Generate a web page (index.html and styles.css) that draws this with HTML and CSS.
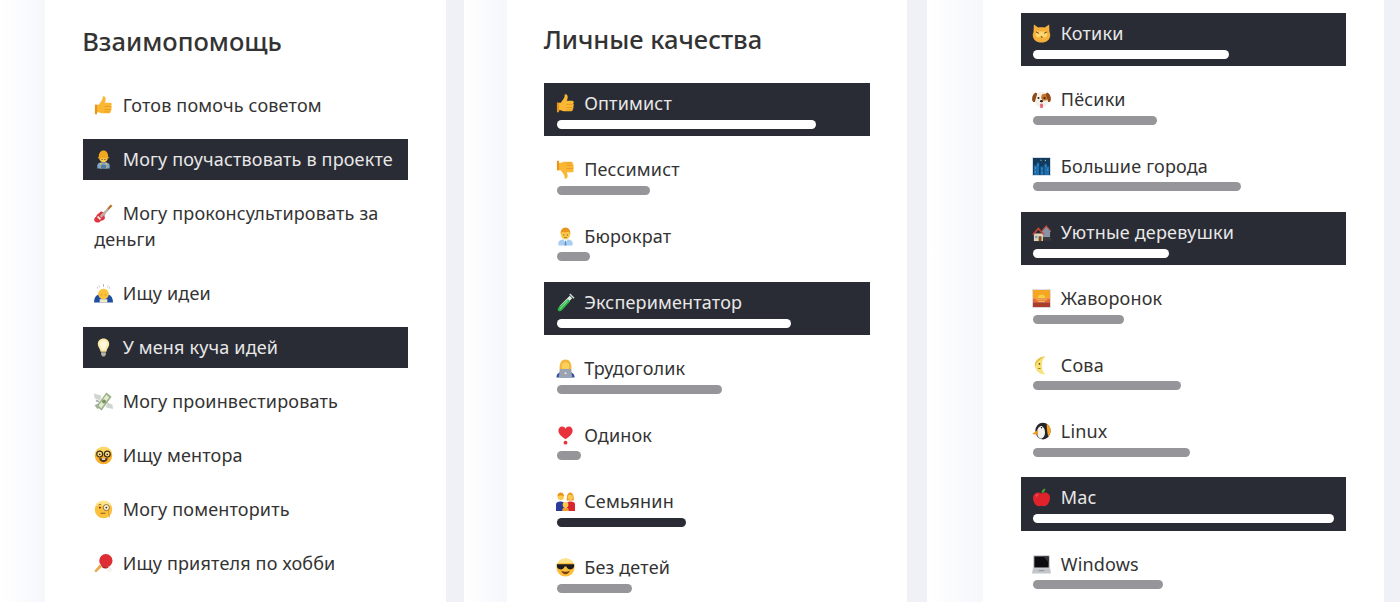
FILE: index.html
```html
<!DOCTYPE html>
<html lang="ru">
<head>
    <meta charset="UTF-8">
    <meta name="viewport" content="width=device-width, initial-scale=1.0">
    <title>Взаимопомощь и личные качества</title>
    <link rel="stylesheet" href="styles.css">
</head>
<body>
    <!-- emoji drawn by hand, one symbol each -->
    <svg class="sprite" xmlns="http://www.w3.org/2000/svg">
        <symbol id="i-up" viewBox="0 0 20 20">
            <g transform="translate(0 -.6) scale(1 1.1)">
                <path fill="#f9b733" d="M1 9h4l3.200-4.200C9 3.600 9.200 2.400 9.200 1c1.900-.6 3.100.8 3.100 2.600 0 1.300-.4 2.400-1 3.400h5.900c1.500 0 2 2 .8 2.700 1 .6 1 2.100.1 2.700.8.7.5 2.100-.5 2.400.4 1.100-.2 2.200-1.500 2.200H9c-1.600 0-2.800-.7-4-1H1z"/>
                <path fill="#e8951c" d="M1 9h2.200v8.900H1zM11 10.300h6.500v.8H11zM11 12.900h6.200v.8H11zM11 15.400h5.500v.8H11z"/>
            </g>
        </symbol>
        <symbol id="i-down" viewBox="0 0 20 20">
            <g transform="translate(0 -1.400) scale(1 1.1)">
                <path fill="#f9b733" d="M1 11h4l3.200 4.200c.8 1.200 1 2.400 1 3.800 1.900.6 3.100-.8 3.100-2.600 0-1.300-.4-2.400-1-3.400h5.900c1.500 0 2-2 .8-2.700 1-.6 1-2.100.1-2.700.8-.7.5-2.100-.5-2.400.4-1.100-.2-2.200-1.500-2.200H9c-1.600 0-2.800.7-4 1H1z"/>
                <path fill="#e8951c" d="M1 2.100h2.200V11H1zM11 8.900h6.500v.8H11zM11 6.300h6.200v.8H11zM11 3.800h5.500v.8H11z"/>
            </g>
        </symbol>
        <symbol id="i-worker" viewBox="0 0 20 20">
            <path fill="#7fa6c9" d="M3.500 19.500v-3C3.500 14 6 13 10 13s6.500 1 6.500 3.500v3z"/>
            <path fill="#f6c23c" d="M6.500 13.500h1.500v6H6.500zM12 13.500h1.500v6H12z"/>
            <path fill="#4f7fae" d="M7 15.500h6v4H7z"/>
            <circle cx="10" cy="8.500" r="4.500" fill="#fbc94a"/>
            <path fill="#f2a922" d="M5 7.500C5 3 7 .5 10 .5s5 2.500 5 7l1 .5v.8H4V8z"/>
            <path fill="#5a3a1a" d="M8 9.500h1v1H8zM11 9.500h1v1h-1z"/>
        </symbol>
        <symbol id="i-guitar" viewBox="0 0 20 20">
            <path fill="#e0353f" d="M8 8c1 .8 3 .8 3.800 1.700.5.700-.5 1.500-.8 2.300-.3 1 1.400 2.400-.1 4-1.500 1.700-3.800 1.200-4.400 2.500C5.700 20 2 20 .7 18.100c-.9-1.300-.5-3.400.7-4.100 1-.5 1.200-1.800 2-2.900C4.200 10 5.500 10 6 9 6.400 8.100 7.200 7.500 8 8z"/>
            <path fill="#b8b2a8" d="M6 12.500l8.500-8.500 1.800 1.800L8 14.500z"/>
            <path fill="#f4f2ea" d="M4.500 12.500l3 3-1.400 1.300-3-3z"/>
            <path fill="#b9712c" d="M14 4.500L17.500.5l2 1.500-4 4z"/>
        </symbol>
        <symbol id="i-bow" viewBox="0 0 20 20">
            <path fill="#1f4fa0" d="M0 19.500c0-4.500 1.500-7.500 5-8.500h10c3.500 1 5 4 5 8.500z"/>
            <circle cx="10" cy="10.500" r="5.600" fill="#fbc33c"/>
            <path fill="#d98f16" d="M6.800 11h2.200v.8H6.800zM11 11h2.200v.8H11z"/>
            <path fill="#f2e9c8" d="M6 16h8v3.500H6z"/>
            <path fill="#9aa0a8" d="M5 .5l1 3-.8.3zM9.600 0h.8v3h-.8zM15 .5l-1 3 .8.3zM2.500 2l2 2.500-.6.500zM17.500 2l-2 2.500.6.500z"/>
        </symbol>
        <symbol id="i-bulb" viewBox="0 0 20 20">
            <path fill="#fde9a8" d="M10 .5c3.600 0 6 2.600 6 5.800 0 3-2.400 4.700-3 8.200H7c-.6-3.500-3-5.200-3-8.200C4 3.100 6.400.5 10 .5z"/>
            <path fill="#fff8dc" d="M10 2.500c2 0 3.500 1.600 3.500 3.700 0 2-1.500 3.500-2.200 6H8.700C8 9.700 6.500 8.200 6.500 6.200 6.500 4.100 8 2.500 10 2.500z"/>
            <path fill="#b6b3a6" d="M7.500 15h5v2.500l-1.500 2H9l-1.500-2z"/>
        </symbol>
        <symbol id="i-money" viewBox="0 0 20 20">
            <path fill="#cfd6cf" d="M0 1.500l8 2.500-1.500 5L.5 6.500zM20 18l-7.500-2 1.500-5 5.500 2.500z"/>
            <path fill="#a9b3a9" d="M.5 14l5-2.500 3 3.500L3.500 18zM2 8l4 1.500-1 1.500-3-1z"/>
            <path fill="#9ab088" d="M13 .5L18.500 5 8 19.500 2.500 15z"/>
            <path fill="#e2ebcd" d="M13 3l3 2.400L7.700 17l-3-2.400z"/>
            <circle cx="10.500" cy="10" r="2.100" fill="#7a9468"/>
        </symbol>
        <symbol id="i-nerd" viewBox="0 0 20 20">
            <circle cx="10" cy="10" r="9.200" fill="#f7b02c"/>
            <path fill="#fdd866" d="M10 .8a9.200 9.200 0 0 1 9 7.200H1A9.200 9.200 0 0 1 10 .8z"/>
            <circle cx="6" cy="8.500" r="3.100" fill="#fbe08a" stroke="#3a2a16" stroke-width="1.300"/>
            <circle cx="14" cy="8.500" r="3.100" fill="#fbe08a" stroke="#3a2a16" stroke-width="1.300"/>
            <circle cx="6" cy="8.800" r=".9" fill="#3a2a16"/>
            <circle cx="14" cy="8.800" r=".9" fill="#3a2a16"/>
            <path fill="#5b3413" d="M5.500 13h9c0 2.500-2 4-4.500 4s-4.500-1.500-4.500-4z"/>
            <path fill="#fff" d="M8.300 13h3.400v1.500H8.300z"/>
        </symbol>
        <symbol id="i-monocle" viewBox="0 0 20 20">
            <circle cx="10" cy="10" r="9.200" fill="#fbc03c"/>
            <path fill="#fde58a" d="M10 .8a9.200 9.200 0 0 1 8.200 5.200H1.800A9.200 9.200 0 0 1 10 .8z"/>
            <circle cx="13" cy="8" r="3.200" fill="#fff6d8" stroke="#7a5a24" stroke-width=".9"/>
            <circle cx="13" cy="8" r="1" fill="#3a2a16"/>
            <circle cx="6.200" cy="8" r="1" fill="#3a2a16"/>
            <path fill="#8a5a1c" d="M4.500 5l3-1 .3.700-3 1zM7 13.500h5v.9H7z"/>
            <path fill="#c78a24" d="M15.500 10.500l1 8h-.6l-1-7.800z"/>
        </symbol>
        <symbol id="i-pong" viewBox="0 0 20 20">
            <circle cx="12.500" cy="7" r="7" fill="#dd2e35"/>
            <path fill="#b31f26" d="M6 9.500c1.500 3 4.500 4.500 8 4.300 1 0 2-.5 2.800-1-2 2.500-5 3-7.500 2z"/>
            <path fill="#e9a84a" d="M.5 17.500l5.500-6.500 2.500 2.500L2 19.500z"/>
            <circle cx="16.500" cy="16.500" r="2.500" fill="#f3f1ec"/>
        </symbol>
        <symbol id="i-office" viewBox="0 0 20 20">
            <path fill="#a8cdf0" d="M2.500 19.500v-2.500c0-2.500 3-4 7.500-4s7.500 1.500 7.500 4v2.500z"/>
            <path fill="#fff" d="M7.500 13h5L10 17z"/>
            <path fill="#5b8fc7" d="M9.500 14.500h1l.5 5H9z"/>
            <circle cx="10" cy="8" r="5" fill="#fbc94a"/>
            <path fill="#e8951c" d="M5 8C4.300 3.500 6.500.5 10 .5s5.700 3 5 7.500c-.5-1.500-1-2.500-2-3-2 .8-4.500.8-6 0-1 .5-1.500 1.500-2 3z"/>
            <path fill="#5a3a1a" d="M7.700 8h1v1h-1zM11.300 8h1v1h-1zM8.500 10.700h3v.6h-3z"/>
        </symbol>
        <symbol id="i-tube" viewBox="0 0 20 20">
            <path fill="#cfe7d6" d="M15 .5l4.500 4.500-1 1-4.500-4.500z"/>
            <path fill="#dcefe4" d="M14.500 3l2.500 2.500L6 16.500l-2.500-2.500z"/>
            <path fill="#2fb548" d="M12.500 6.500L15 8.800 6 18.500c-1 1-2.800 1-3.700.2-.8-.8-.7-2.500.3-3.500z"/>
            <path fill="#7fdc8c" d="M11.800 8l.8.8-8 8.200-.7-.7z"/>
        </symbol>
        <symbol id="i-tech" viewBox="0 0 20 20">
            <path fill="#2f4fa8" d="M.5 19.500c0-4 3-6.500 9.500-6.500s9.500 2.500 9.500 6.500z"/>
            <path fill="#f2b63c" d="M4 12C3 5.500 5 .5 10 .5S17 5.500 16 12z"/>
            <circle cx="10" cy="7.500" r="4" fill="#fbd05a"/>
            <path fill="#9aa3ae" d="M4 10.500h12l1 9H3z"/>
            <circle cx="10" cy="15" r="1.100" fill="#e6e9ee"/>
        </symbol>
        <symbol id="i-heart" viewBox="0 0 20 20">
            <path fill="#e8323c" d="M10 14C5 10.800 2.500 8 2.500 5 2.500 2.300 4.300.5 6.300.5c1.600 0 3 .9 3.700 2.300C10.700 1.400 12.100.5 13.700.5c2 0 3.800 1.800 3.800 4.500 0 3-2.500 5.800-7.500 9z"/>
            <circle cx="10" cy="17.500" r="2" fill="#e8323c"/>
        </symbol>
        <symbol id="i-family" viewBox="0 0 20 20">
            <path fill="#2a3a96" d="M0 20v-7c0-2 2-3 4.500-3 2 0 3.500.5 4.500 2v8z"/>
            <path fill="#d8262e" d="M11 20v-8c1-1.500 2.500-2 4.500-2 2.500 0 4.500 1 4.500 3v7z"/>
            <circle cx="5" cy="5" r="3.400" fill="#fbc94a"/>
            <path fill="#e8951c" d="M1.600 4.500C1.600 2 3 .5 5 .5s3.400 1.500 3.400 4C6.500 3.500 4 3.500 1.600 4.500z"/>
            <path fill="#e8951c" d="M11.500 9c-.7-4.500.8-8.500 3.500-8.500S19.200 4.500 18.500 9z"/>
            <circle cx="15" cy="5.500" r="2.800" fill="#fbc94a"/>
            <path fill="#f0a02c" d="M6.500 20c0-2.500 1.300-4 3.500-4s3.500 1.500 3.500 4z"/>
            <circle cx="10" cy="13.500" r="3" fill="#fbc94a"/>
        </symbol>
        <symbol id="i-cool" viewBox="0 0 20 20">
            <circle cx="10" cy="10" r="9.500" fill="#fbbe3c"/>
            <path fill="#fde28a" d="M10 .5a9.500 9.500 0 0 1 8.200 4.700H1.800A9.500 9.500 0 0 1 10 .5z"/>
            <path fill="#1d1d1f" d="M.8 6.500h18.400v1.500c0 2.500-1.500 4-4.200 4-2.200 0-3.500-1.300-4-3H9c-.5 1.700-1.800 3-4 3-2.700 0-4.200-1.500-4.200-4z"/>
            <path fill="#7a3d12" d="M5.500 13.500c3 1.300 6 1.300 9 0-.7 2.500-2.500 3.500-4.500 3.500s-3.800-1-4.500-3.500z"/>
        </symbol>
        <symbol id="i-cat" viewBox="0 0 20 20">
            <path fill="#f5b03a" d="M2 .5l4.500 3.300C8.500 3.200 11.500 3.200 13.500 3.800L18 .5l.4 8c.5 1 .8 2 .8 3 0 4.800-4 8-9.200 8S.8 16.300.8 11.500c0-1 .3-2 .8-3z"/>
            <path fill="#fdd76e" d="M5 8h10c1.500 2 1.500 4 0 6H5c-1.500-2-1.500-4 0-6z"/>
            <path fill="#5a3413" d="M4.500 8l3 1.500-.4.800-3-1.500zM15.500 8l-3 1.500.4.800 3-1.500zM8.800 13.500l2-1 .3.600-1 .5 1 .5-.3.600z"/>
        </symbol>
        <symbol id="i-dog" viewBox="0 0 20 20">
            <ellipse cx="10" cy="10" rx="7.800" ry="8.200" fill="#f6f1e8"/>
            <circle cx="13.300" cy="7.500" r="3.600" fill="#c4752c"/>
            <path fill="#8f4a18" d="M4 2.500C1.200 3.500-.2 7 .2 10.500c.2 1.600 1.400 2.500 2.800 2L5.500 4zM16 2.500c2.800 1 4.200 4.500 3.800 8-.2 1.600-1.400 2.500-2.800 2L14.500 4z"/>
            <circle cx="6.800" cy="8.500" r="1.100" fill="#2a1a0c"/>
            <circle cx="13.200" cy="8.500" r="1.100" fill="#2a1a0c"/>
            <ellipse cx="10" cy="11.800" rx="1.700" ry="1.200" fill="#2a1a0c"/>
            <path fill="#e8677c" d="M8.500 14.500h3v3.500c0 1.500-3 1.500-3 0z"/>
        </symbol>
        <symbol id="i-city" viewBox="0 0 20 20">
            <path fill="#dfe6ee" d="M0 0h20v20H0z"/>
            <path fill="#113a5e" d="M1 1h18v18H1z"/>
            <path fill="#1f6fae" d="M2 19V9h3V6h2.500v13zM9 19v-9h3v9zM13 19V7h2.500v3H18v9z"/>
            <path fill="#5fb2d8" d="M3 11h1v1H3zM6 8h1v1H6zM10 12h1v1h-1zM14 9h1v1h-1zM16 13h1v1h-1zM3 15h1v1H3zM10 16h1v1h-1z"/>
            <path fill="#cfe4a8" d="M14 2.500l.8 1.500-1.500.5zM9 3h1v1H9z"/>
        </symbol>
        <symbol id="i-houses" viewBox="0 0 20 20">
            <path fill="#8a93a6" d="M10 9l5-6 5 6-1 .5V15h-8z"/>
            <path fill="#bd3f2e" d="M10 8l5-6 5 6h-1.500L15 4l-3.500 4z"/>
            <path fill="#3a3a3a" d="M11 15h9v3.500h-9z"/>
            <path fill="#e3d2b5" d="M2 11h9.500v8H2z"/>
            <path fill="#c8452f" d="M0 12l6.700-7.500L13.500 12h-2L6.700 7 2 12z"/>
            <path fill="#7a4a24" d="M7 14h3v5H7z"/>
            <path fill="#6fa4cc" d="M3.200 13.500h2.500V16H3.200z"/>
        </symbol>
        <symbol id="i-sunrise" viewBox="0 0 20 20">
            <path fill="#dfe0e6" d="M0 0h20v20H0z"/>
            <path fill="#f5a623" d="M1 1h18v9H1z"/>
            <path fill="#f7d04a" d="M6 10a4 4 0 0 1 8 0z"/>
            <path fill="#e8672a" d="M1 10h18v4H1z"/>
            <path fill="#a93c2a" d="M1 14h18v5H1z"/>
            <path fill="#f9d976" d="M4 11h12v.8H4zM6.500 13h7v.8h-7z"/>
        </symbol>
        <symbol id="i-moon" viewBox="0 0 20 20">
            <path fill="#f7e27a" d="M14 .3C7.500 1 3 5 3 10s4.500 9 11 9.700c-2.500-2.500-3.500-5.700-3.500-9.700S11.500 2.800 14 .3z"/>
            <path fill="#e6bd3a" d="M14 .3C7.500 1 3 5 3 10c0 .5 0 1 .1 1.500C4.500 6.500 9 3 14 .3z"/>
            <circle cx="7.800" cy="8.200" r=".9" fill="#5a4310"/>
            <path fill="#5a4310" d="M6.500 13h2.500v.7H6.500z"/>
        </symbol>
        <symbol id="i-penguin" viewBox="0 0 20 20">
            <ellipse cx="11.500" cy="9.500" rx="8" ry="8.800" fill="#26262a"/>
            <path fill="#f3a523" d="M15.500 2c3 1 4.500 4.500 4 8.500-.3 2-1.500 4-2.500 4.500-1-4-1.500-9-1.500-13z"/>
            <ellipse cx="9.500" cy="11" rx="4.200" ry="6.500" fill="#f4f2ee"/>
            <circle cx="9.800" cy="6" r="1.500" fill="#fff"/>
            <circle cx="10" cy="6" r=".8" fill="#111"/>
            <path fill="#ef9a1c" d="M0 12.500l6-4 .5 5z"/>
        </symbol>
        <symbol id="i-apple" viewBox="0 0 20 20">
            <path fill="#e0222c" d="M10 6c2-1.500 4.500-1.700 6.500-.5 2.500 1.500 3 5 2 8-1 3.300-3.200 5.800-5.500 5.800-1.200 0-2-.5-3-.5s-1.800.5-3 .5c-2.300 0-4.500-2.500-5.500-5.800-1-3-.5-6.500 2-8C5.500 4.300 8 4.500 10 6z"/>
            <path fill="#f2676e" d="M4 8c.8-1 2-1.500 3-1.300-1.500.8-2 2-2.300 3.500z"/>
            <path fill="#3f9e2c" d="M10 5.500C9.800 3 11 1 14 .5c0 2.700-1.500 4.500-4 5z"/>
            <path fill="#6b3a12" d="M9.500 3h.8v3h-.8z"/>
        </symbol>
        <symbol id="i-laptop" viewBox="0 0 20 20">
            <path fill="#a9acb2" d="M1.500 .5h17V14h-17z"/>
            <path fill="#0c0c0e" d="M2.500 1.500h15V13h-15z"/>
            <path fill="#34343a" d="M12 1.500h5.500V8z"/>
            <path fill="#c2c5ca" d="M1 14h18l1 5.500H0z"/>
            <path fill="#8d9096" d="M7 16h6v1H7z"/>
        </symbol>
    </svg>

    <div class="columns">
        <section class="column column-help">
            <div class="card">
                <h2 class="title">Взаимопомощь</h2>
                <ul class="list">
                    <li class="item"><svg class="emoji"><use href="#i-up"/></svg>Готов помочь советом</li>
                    <li class="item active"><svg class="emoji"><use href="#i-worker"/></svg>Могу поучаствовать в проекте</li>
                    <li class="item"><svg class="emoji"><use href="#i-guitar"/></svg>Могу проконсультировать за деньги</li>
                    <li class="item"><svg class="emoji"><use href="#i-bow"/></svg>Ищу идеи</li>
                    <li class="item active"><svg class="emoji"><use href="#i-bulb"/></svg>У меня куча идей</li>
                    <li class="item"><svg class="emoji"><use href="#i-money"/></svg>Могу проинвестировать</li>
                    <li class="item"><svg class="emoji"><use href="#i-nerd"/></svg>Ищу ментора</li>
                    <li class="item"><svg class="emoji"><use href="#i-monocle"/></svg>Могу поменторить</li>
                    <li class="item"><svg class="emoji"><use href="#i-pong"/></svg>Ищу приятеля по хобби</li>
                </ul>
            </div>
        </section>

        <section class="column column-traits">
            <div class="card">
                <h2 class="title">Личные качества</h2>
                <ul class="list list-bars">
                    <li class="item active"><svg class="emoji"><use href="#i-up"/></svg>Оптимист<div class="bar" style="width: 86%"></div></li>
                    <li class="item"><svg class="emoji"><use href="#i-down"/></svg>Пессимист<div class="bar" style="width: 31%"></div></li>
                    <li class="item"><svg class="emoji"><use href="#i-office"/></svg>Бюрократ<div class="bar" style="width: 11%"></div></li>
                    <li class="item active"><svg class="emoji"><use href="#i-tube"/></svg>Экспериментатор<div class="bar" style="width: 78%"></div></li>
                    <li class="item"><svg class="emoji"><use href="#i-tech"/></svg>Трудоголик<div class="bar" style="width: 55%"></div></li>
                    <li class="item"><svg class="emoji"><use href="#i-heart"/></svg>Одинок<div class="bar" style="width: 8%"></div></li>
                    <li class="item mine"><svg class="emoji"><use href="#i-family"/></svg>Семьянин<div class="bar" style="width: 43%"></div></li>
                    <li class="item"><svg class="emoji"><use href="#i-cool"/></svg>Без детей<div class="bar" style="width: 25%"></div></li>
                </ul>
            </div>
        </section>

        <section class="column column-likes">
            <div class="card">
                <ul class="list list-bars">
                    <li class="item active"><svg class="emoji"><use href="#i-cat"/></svg>Котики<div class="bar" style="width: 65%"></div></li>
                    <li class="item"><svg class="emoji"><use href="#i-dog"/></svg>Пёсики<div class="bar" style="width: 41%"></div></li>
                    <li class="item"><svg class="emoji"><use href="#i-city"/></svg>Большие города<div class="bar" style="width: 69%"></div></li>
                    <li class="item active"><svg class="emoji"><use href="#i-houses"/></svg>Уютные деревушки<div class="bar" style="width: 45%"></div></li>
                    <li class="item"><svg class="emoji"><use href="#i-sunrise"/></svg>Жаворонок<div class="bar" style="width: 30%"></div></li>
                    <li class="item"><svg class="emoji"><use href="#i-moon"/></svg>Сова<div class="bar" style="width: 49%"></div></li>
                    <li class="item"><svg class="emoji"><use href="#i-penguin"/></svg>Linux<div class="bar" style="width: 52%"></div></li>
                    <li class="item active"><svg class="emoji"><use href="#i-apple"/></svg>Mac<div class="bar" style="width: 100%"></div></li>
                    <li class="item"><svg class="emoji"><use href="#i-laptop"/></svg>Windows<div class="bar" style="width: 43%"></div></li>
                </ul>
            </div>
        </section>
    </div>
</body>
</html>
```

FILE: styles.css
```css
html, body {
    height: 100%;
}
body {
    margin: 0;
    font-family: "Noto Sans", "Open Sans", sans-serif;
    color: #333;
    background-color: #eff1f7;
    overflow: hidden;
}
.sprite {
    display: none;
}
.columns {
    display: flex;
    height: 602px;
    overflow: hidden;
}
.column {
    box-sizing: border-box;
    height: 602px;
    background: linear-gradient(90deg, #fff, #f5f7fb) no-repeat;
}
.column-help {
    width: 464px;
    padding-left: 45px;
    background-size: 45px 100%;
}
.column-traits {
    width: 463px;
    padding-left: 42.67px;
    background-size: 43px 100%;
}
.column-likes {
    width: 473px;
    padding-left: 56px;
    background-size: 56px 100%;
}
.card {
    box-sizing: border-box;
    width: 401px;
    height: 100%;
    padding: 0 37.8px;
    background-color: #fff;
}
.column-help .card {
    padding-left: 37.67px;
}
.column-traits .card {
    width: 400px;
    padding-left: 37.5px;
}
.title {
    margin: 0 0 0 -.5px;
    padding-top: 24px;
    font-size: 25.5px;
    line-height: 34px;
    font-weight: 500;
    color: #333;
}
.column-help .title {
    margin-bottom: 27px;
}
.column-traits .title {
    padding-top: 22px;
    margin-bottom: 26.8px;
}
.column-likes .card {
    padding-top: 12.8px;
}
.list {
    list-style: none;
    margin: 0;
    padding: 0;
}
.item {
    box-sizing: border-box;
    width: 325.5px;
    padding: 6.5px 13px 8.5px 11.5px;
    margin-bottom: 13px;
    font-size: 18px;
    line-height: 26px;
    letter-spacing: .17px;
}
.list-bars .item {
    padding-top: 7.4px;
    padding-bottom: 7.67px;
    margin-bottom: 12.66px;
}
.item.active {
    background-color: #2a2c35;
    color: #e8e8e8;
}
.emoji {
    width: 19px;
    height: 19px;
    margin-right: 9.5px;
    vertical-align: -3px;
}
.bar {
    height: 9px;
    margin: 3.6px 0 0 1px;
    border-radius: 5px;
    background-color: #96969a;
}
.item.active .bar {
    background-color: #fff;
}
.item.mine .bar {
    background-color: #2a2c35;
}
```
